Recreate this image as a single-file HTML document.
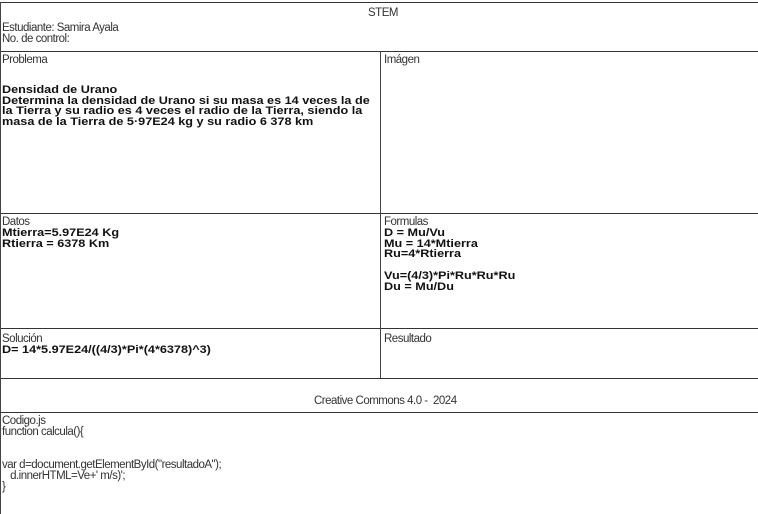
<!DOCTYPE html>
<html><head><meta charset="utf-8"><style>
body{margin:0;width:758px;height:514px;background:#fff;position:relative;overflow:hidden;font-family:"Liberation Sans",sans-serif;color:#222}
.h{position:absolute;left:0;width:758px;height:0;border-top:1.5px solid #333}
.v{position:absolute;width:0;border-left:1.5px solid #444}
.t{position:absolute;font-size:11.5px;letter-spacing:-0.5px;line-height:11px;color:#333;white-space:nowrap}
.b{position:absolute;font-size:11px;font-weight:bold;line-height:10.7px;color:#111;white-space:nowrap;transform:scaleX(1.15);transform-origin:0 0}
</style></head><body>
<div class="h" style="top:2px"></div>
<div class="h" style="top:51px"></div>
<div class="h" style="top:213px"></div>
<div class="h" style="top:328px"></div>
<div class="h" style="top:378px"></div>
<div class="h" style="top:412px"></div>
<div class="v" style="left:0;top:2px;height:512px"></div>
<div class="v" style="left:380px;top:51px;height:327px"></div>

<div class="t" style="left:368px;top:8px">STEM</div>
<div class="t" style="left:2px;top:23px">Estudiante: Samira Ayala<br>No. de control:</div>

<div class="t" style="left:2px;top:55px">Problema</div>
<div class="b" style="left:2px;top:85px">Densidad de Urano<br>Determina la densidad de Urano si su masa es 14 veces la de<br>la Tierra y su radio es 4 veces el radio de la Tierra, siendo la<br>masa de la Tierra de 5·97E24 kg y su radio 6 378 km</div>
<div class="t" style="left:384px;top:55px">Imágen</div>

<div class="t" style="left:2px;top:217px">Datos</div>
<div class="b" style="left:2px;top:228px">Mtierra=5.97E24 Kg<br>Rtierra = 6378 Km</div>
<div class="t" style="left:384px;top:217px">Formulas</div>
<div class="b" style="left:384px;top:228px">D = Mu/Vu<br>Mu = 14*Mtierra<br>Ru=4*Rtierra<br><br>Vu=(4/3)*Pi*Ru*Ru*Ru<br>Du = Mu/Du</div>

<div class="t" style="left:2px;top:334px">Solución</div>
<div class="b" style="left:2px;top:345px">D= 14*5.97E24/((4/3)*Pi*(4*6378)^3)</div>
<div class="t" style="left:384px;top:334px">Resultado</div>

<div class="t" style="left:314px;top:396px">Creative Commons 4.0 -&nbsp; 2024</div>

<div class="t" style="left:2px;top:416px">Codigo.js<br>function calcula(){<br><br><br>var d=document.getElementById("resultadoA");<br>&nbsp;&nbsp;&nbsp;d.innerHTML=Ve+' m/s)';<br>}</div>
</body></html>
